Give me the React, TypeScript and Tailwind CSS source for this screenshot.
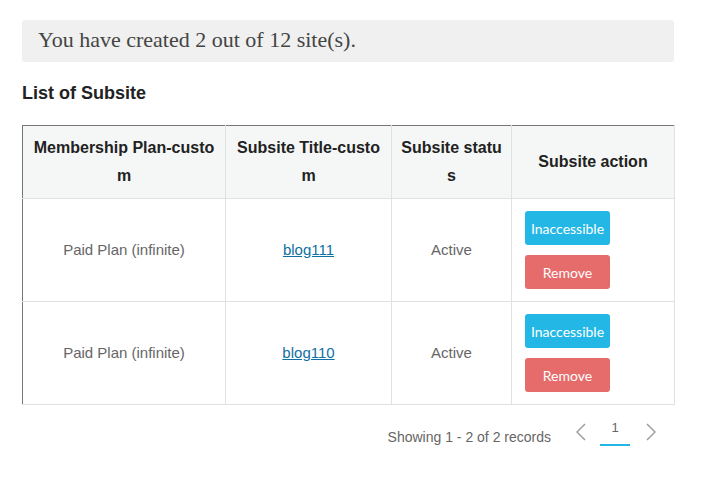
import React from "react";

const rows = [
  { plan: "Paid Plan (infinite)", title: "blog111", status: "Active" },
  { plan: "Paid Plan (infinite)", title: "blog110", status: "Active" },
];

function Chevron({ dir }: { dir: "left" | "right" }) {
  return (
    <svg width="12" height="20" viewBox="0 0 12 20" fill="none">
      {dir === "left" ? (
        <polyline points="10,2 2,10 10,18" stroke="#999" strokeWidth="1.4" />
      ) : (
        <polyline points="2,2 10,10 2,18" stroke="#999" strokeWidth="1.4" />
      )}
    </svg>
  );
}

export default function App() {
  return (
    <div className="w-[725px] h-[498px] bg-white pt-[20px] pl-[22px] font-['Liberation_Sans',Arial,sans-serif]">
      <div className="w-[652px]">
        <div className="h-[42px] rounded-[3px] bg-[#eff0ef] flex items-center pl-[16px] pb-[3px] font-['Liberation_Serif','Times_New_Roman',serif] text-[22px] text-[#444]">
          You have created 2 out of 12 site(s).
        </div>
        <h2 className="mt-[20px] text-[18px] font-bold text-[#222] leading-[22px]">List of Subsite</h2>
        <table className="mt-[21px] w-[652px] border-collapse table-fixed">
          <colgroup>
            <col className="w-[203px]" />
            <col className="w-[166px]" />
            <col className="w-[120px]" />
            <col className="w-[163px]" />
          </colgroup>
          <thead>
            <tr className="bg-[#f5f7f6] h-[73px]">
              <th className="border border-[#dee2e2] border-t-[#777] border-l-[#777] px-1 py-2 text-center text-[16px] font-bold leading-[28px] text-[#222]">
                Membership Plan-custo
                <br />m
              </th>
              <th className="border border-[#dee2e2] border-t-[#777] px-1 py-2 text-center text-[16px] font-bold leading-[28px] text-[#222]">
                Subsite Title-custo
                <br />m
              </th>
              <th className="border border-[#dee2e2] border-t-[#777] px-1 py-2 text-center text-[16px] font-bold leading-[28px] text-[#222]">
                Subsite statu
                <br />s
              </th>
              <th className="border border-[#dee2e2] border-t-[#777] px-1 py-2 text-center text-[16px] font-bold leading-[28px] text-[#222]">
                Subsite action
              </th>
            </tr>
          </thead>
          <tbody>
            {rows.map((r) => (
              <tr key={r.title} className="h-[103px] text-[15px]">
                <td className="border border-[#dee2e2] border-l-[#777] text-center text-[#666]">{r.plan}</td>
                <td className="border border-[#dee2e2] text-center">
                  <a href="#" className="text-[#0f6fa3] underline">
                    {r.title}
                  </a>
                </td>
                <td className="border border-[#dee2e2] text-center text-[#666]">{r.status}</td>
                <td className="border border-[#dee2e2] pl-[13px] py-[12px]">
                  <div className="flex flex-col gap-[10px] font-['Lato',sans-serif] text-[14px]">
                    <button className="w-[85px] h-[34px] rounded-[3px] bg-[#23b7e5] text-white">Inaccessible</button>
                    <button className="w-[85px] h-[34px] rounded-[3px] bg-[#e66c6c] text-white">Remove</button>
                  </div>
                </td>
              </tr>
            ))}
          </tbody>
        </table>
        <div className="flex justify-end items-start pr-[17px] mt-[15px]">
          <span className="mt-[7px] text-[14px] text-[#666] leading-[20px]">Showing 1 - 2 of 2 records</span>
          <div className="ml-[24px] mt-[2px]">
            <Chevron dir="left" />
          </div>
          <div className="ml-[13px] w-[30px] h-[26px] flex justify-center border-b-2 border-[#23b7e5] text-[13px] text-[#666] leading-[16px]">
            1
          </div>
          <div className="ml-[15px] mt-[2px]">
            <Chevron dir="right" />
          </div>
        </div>
      </div>
    </div>
  );
}
